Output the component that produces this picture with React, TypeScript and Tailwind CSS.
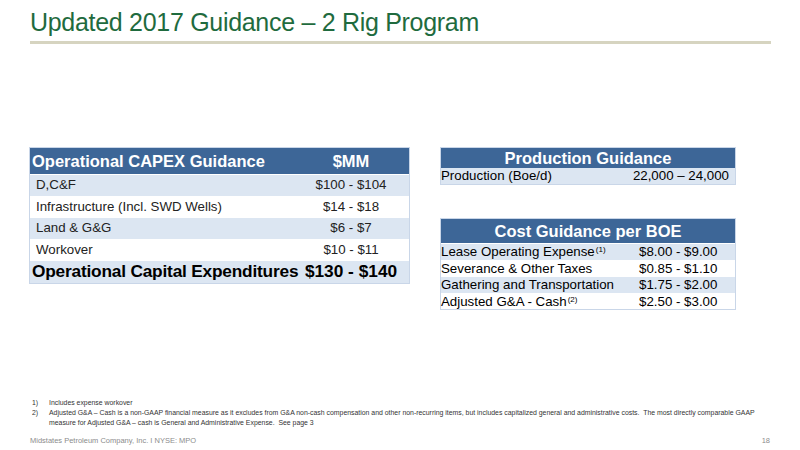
import React from "react";

const capex = [
  { name: "D,C&F", value: "$100 - $104", shade: true },
  { name: "Infrastructure (Incl. SWD Wells)", value: "$14 - $18", shade: false },
  { name: "Land & G&G", value: "$6 - $7", shade: true },
  { name: "Workover", value: "$10 - $11", shade: false },
];

const costs = [
  { name: "Lease Operating Expense", note: "(1)", value: "$8.00 - $9.00", shade: true },
  { name: "Severance & Other Taxes", note: "", value: "$0.85 - $1.10", shade: false },
  { name: "Gathering and Transportation", note: "", value: "$1.75 - $2.00", shade: true },
  { name: "Adjusted G&A - Cash", note: "(2)", value: "$2.50 - $3.00", shade: false },
];

const App: React.FC = () => {
  return (
    <div
      className="w-[800px] h-[450px] bg-white flex flex-col overflow-hidden"
      style={{ fontFamily: '"Liberation Sans", Arial, sans-serif' }}
    >
      <div className="px-[30px] pt-[7px]">
        <h1 className="text-[25px] leading-[30px] text-[#1f6b3e] tracking-[-0.3px]">
          Updated 2017 Guidance – 2 Rig Program
        </h1>
        <div className="mt-[4px] h-[3px] w-[741px] bg-[#d6d4c0]" />
      </div>

      <div className="flex items-start pl-[29px] mt-[103px] gap-[30px]">
        {/* capex table */}
        <div className="w-[381px] border border-[#c9d6e8]">
          <div className="flex h-[26px] items-center bg-[#3d6697] text-white font-bold text-[16.5px]">
            <div className="w-[263px] pl-[2px] whitespace-nowrap">Operational CAPEX Guidance</div>
            <div className="flex-1 text-center">$MM</div>
          </div>
          {capex.map((r) => (
            <div
              key={r.name}
              className={`flex h-[21.5px] items-center text-[13.3px] text-[#222] border-t border-white ${
                r.shade ? "bg-[#dce6f2]" : "bg-white"
              }`}
            >
              <div className="w-[263px] pl-[6px]">{r.name}</div>
              <div className="flex-1 text-center">{r.value}</div>
            </div>
          ))}
          <div className="flex h-[23px] items-center bg-[#dce6f2] border-t border-white text-[17.3px] font-bold text-black">
            <div className="w-[263px] pl-[2px] whitespace-nowrap tracking-[-0.2px]">
              Operational Capital Expenditures
            </div>
            <div className="flex-1 text-center">$130 - $140</div>
          </div>
        </div>

        {/* right tables */}
        <div className="w-[296px] flex flex-col">
          <div className="border border-[#c9d6e8]">
            <div className="h-[20px] flex items-center justify-center bg-[#3d6697] text-white font-bold text-[16.5px]">
              Production Guidance
            </div>
            <div className="h-[16px] flex items-center justify-between bg-[#dce6f2] text-[13.3px] leading-none text-black pr-[6px]">
              <span>Production (Boe/d)</span>
              <span>22,000 – 24,000</span>
            </div>
          </div>

          <div className="mt-[33px] border border-[#c9d6e8]">
            <div className="h-[24px] flex items-center justify-center bg-[#3d6697] text-white font-bold text-[16.5px]">
              Cost Guidance per BOE
            </div>
            {costs.map((r) => (
              <div
                key={r.name}
                className={`flex h-[16.5px] items-center text-[13.3px] leading-none text-black border-t border-white ${
                  r.shade ? "bg-[#dce6f2]" : "bg-white"
                }`}
              >
                <div className="w-[198px] whitespace-nowrap">
                  {r.name}
                  {r.note && <span className="text-[8px] relative -top-[4px] ml-[1px]">{r.note}</span>}
                </div>
                <div className="flex-1">{r.value}</div>
              </div>
            ))}
          </div>
        </div>
      </div>

      <div className="mt-auto pl-[32px] pr-[20px] text-[6.9px] leading-[10px] text-[#333]">
        <div className="flex">
          <span className="w-[17px] shrink-0">1)</span>
          <span>Includes expense workover</span>
        </div>
        <div className="flex">
          <span className="w-[17px] shrink-0">2)</span>
          <span className="whitespace-nowrap">
            Adjusted G&amp;A – Cash is a non-GAAP financial measure as it excludes from G&amp;A non-cash compensation and
            other non-recurring items, but includes capitalized general and administrative costs.&nbsp; The most directly
            comparable GAAP
            <br />
            measure for Adjusted G&amp;A – cash is General and Administrative Expense.&nbsp; See page 3
          </span>
        </div>
      </div>
      <div className="flex justify-between pl-[30px] pr-[30px] pt-[8px] pb-[4px] text-[7.5px] leading-[10px] text-[#8c8c8c]">
        <span>Midstates Petroleum Company, Inc. I NYSE: MPO</span>
        <span>18</span>
      </div>
    </div>
  );
};

export default App;
